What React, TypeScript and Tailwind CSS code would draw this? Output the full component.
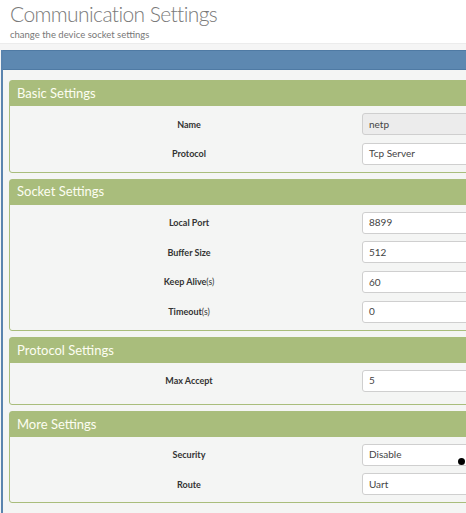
import React from 'react';

type Row = { label: string; unit?: string; value: string; disabled?: boolean };

const sections: { title: string; rows: Row[]; extra?: boolean }[] = [
  {
    title: 'Basic Settings',
    rows: [
      { label: 'Name', value: 'netp', disabled: true },
      { label: 'Protocol', value: 'Tcp Server' },
    ],
  },
  {
    title: 'Socket Settings',
    rows: [
      { label: 'Local Port', value: '8899' },
      { label: 'Buffer Size', value: '512' },
      { label: 'Keep Alive', unit: '(s)', value: '60' },
      { label: 'Timeout', unit: '(s)', value: '0' },
    ],
  },
  {
    title: 'Protocol Settings',
    rows: [{ label: 'Max Accept', value: '5' }],
    extra: true,
  },
  {
    title: 'More Settings',
    rows: [
      { label: 'Security', value: 'Disable' },
      { label: 'Route', value: 'Uart' },
    ],
  },
];

function FormRow({ row }: { row: Row }) {
  return (
    <div className="flex items-center h-[22px]">
      <div className="w-[352px] pl-[6px] text-center text-[9px] text-[#333] leading-none">
        <span className="font-bold">{row.label}</span>
        {row.unit && <span className="text-[8.5px]">{row.unit}</span>}
      </div>
      <div
        className={
          'w-[160px] h-[22px] flex items-center pl-[6px] text-[10px] text-[#444] border border-[#cfcfcf] rounded-[3px] ' +
          (row.disabled ? 'bg-[#ececec]' : 'bg-white')
        }
      >
        {row.value}
      </div>
    </div>
  );
}

export default function App() {
  return (
    <div
      className="relative w-[466px] h-[513px] overflow-hidden bg-white"
      style={{ fontFamily: 'Lato, "Open Sans", sans-serif' }}
    >
      {/* Page header */}
      <div className="h-[44px] pl-[10px] pt-[1px] border-b border-[#ececec]">
        <div className="text-[21px] font-light text-[#7a7a7a] leading-[26px] tracking-[-0.6px]">
          Communication Settings
        </div>
        <div className="text-[9.5px] text-[#777] leading-[12px] mt-[2px]">
          change the device socket settings
        </div>
      </div>

      <div className="bg-[#f5f5f5] pt-[6px] pl-[1px] h-full">
        <div className="w-[560px] border-l-2 border-[#5a84ae] bg-[#f4f5f4] h-full">
          <div className="h-[20px] bg-[#5d88b1] border-t border-b border-[#4f7aa4]" />

          <div className="pl-[6px] pt-[10px] flex flex-col gap-[6px]">
            {sections.map((s) => (
              <div key={s.title} className="border border-[#a9bd7c] rounded-[3px] bg-[#f4f5f4]">
                <div className="h-[25px] bg-[#a9bd7c] flex items-center pl-[7px] text-[13px] text-[#fdfdf2]">
                  {s.title}
                </div>
                <div
                  className={
                    'flex flex-col gap-[7.7px] pt-[7px] ' + (s.extra ? 'pb-[12px]' : 'pb-[7px]')
                  }
                >
                  {s.rows.map((r) => (
                    <FormRow key={r.label} row={r} />
                  ))}
                </div>
              </div>
            ))}
          </div>
        </div>
      </div>

      {/* cursor dot */}
      <div className="absolute left-[458px] top-[458px] w-[7px] h-[7px] rounded-full bg-black" />
    </div>
  );
}
